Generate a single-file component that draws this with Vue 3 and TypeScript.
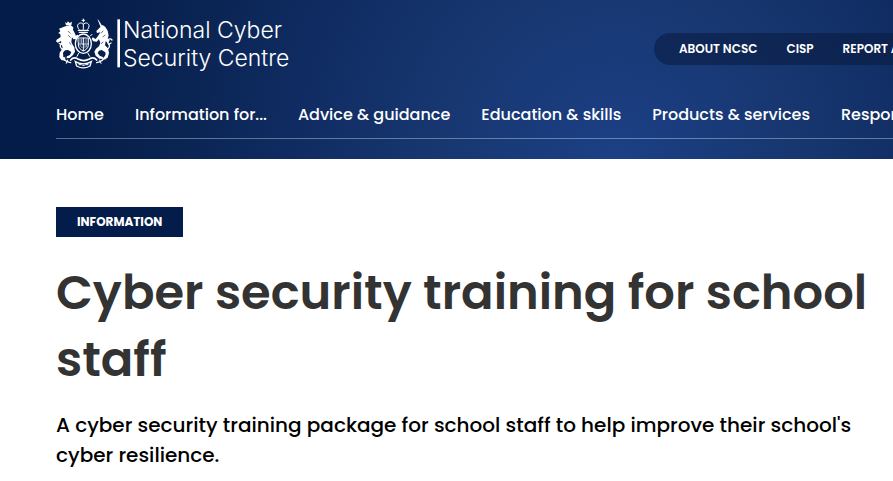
<script setup lang="ts">
interface LinkItem {
  label: string
  href: string
}

const utilityLinks: LinkItem[] = [
  { label: 'About NCSC', href: '#about' },
  { label: 'CISP', href: '#cisp' },
  { label: 'Report an incident', href: '#report' },
]

const mainLinks: LinkItem[] = [
  { label: 'Home', href: '#home' },
  { label: 'Information for...', href: '#information' },
  { label: 'Advice & guidance', href: '#advice' },
  { label: 'Education & skills', href: '#education' },
  { label: 'Products & services', href: '#products' },
  { label: 'Response', href: '#response' },
]
</script>

<template>
  <header class="site-header">
    <div class="top-row">
      <a class="brand" href="#home">
        <svg class="crest" viewBox="18 24 195 156" aria-hidden="true">
          <g fill="none" stroke="#fff" stroke-width="3" stroke-linecap="round">
            <!-- crown -->
            <path d="M100 27v9M96 31h8M87 58c-9-10-3-20 7-19l6 4 6-4c10-1 16 9 7 19M100 42v16" />
            <path d="M85 61h30M88 67h24" stroke-width="4" />
            <!-- garter and shield -->
            <ellipse cx="100" cy="101" rx="24" ry="29" stroke-width="4" />
            <path d="M85 84h30v22c0 8-9 15-15 17-6-2-15-9-15-17zM100 84v38M86 102h28" />
            <path d="M90 88v10M95 88v10M105 90h6M105 96h6M90 106l6 7M105 106v8M110 106v5" stroke-width="2" />
            <path d="M79 78l-5-5M121 78l5-5M86 130l-5 9M114 130l5 9" />
            <!-- tails -->
            <path d="M49 118c-12 2-20-4-18-12 2-7 10-8 9-15-1-5-7-7-10-2M34 104l-6-4M41 90l5-6" stroke-width="4" />
            <path d="M160 117c14 2 20-3 18-11-2-6-8-8-5-14 2-6 9-7 13-2M176 103l7-4M173 93l-6-4" stroke-width="4" />
            <!-- plants and compartment -->
            <path d="M35 137c6 13 14 19 27 21M167 137c-6 13-14 19-27 21" stroke-width="4" />
            <path d="M45 142l-8 6M53 150l-4 10M157 142l8 6M149 150l4 10" />
            <path d="M62 150c9-11 17-6 22-3 11 6 23 6 34 0 5-3 13-8 22 3" stroke-width="5" />
            <path d="M76 155c14 9 34 9 48 0l-4 13c-12 7-28 7-40 0z" stroke-width="4" />
            <path d="M87 164h7M98 166h5M107 164h7" />
          </g>
          <g fill="#fff">
            <!-- lion -->
            <path d="M45 36l5 4 4-6 5 5 7-4-2 11H48z" />
            <path d="M48 48l13-3 9 7-1 8 5 8 2 10 7-4 3 5-7 8-9 1-4-6-2 14 4 8 5 8 2 13-6 10-10 9-10 1 2-6 9-4 4-9-10-6-9 1-6 7 1 13 7 6-3 5-10-2-6-8 1-14 9-14-3-12-2-9-10 5-5-4 2-5 12-8-1-8-6-4 6-5-4-8z" />
            <!-- unicorn -->
            <path d="M142 27l5 5 11 18-5 4z" />
            <path d="M148 54l10-9 8 6 7 11 3 15-3 8 6 6-4 8-8-5-2 12 9 9 3 14-4 14-8 5-3-5 5-6-1-10-11-7-8 2-4 7 6 8 9 4 1 6-11-1-11-9-4-12 5-9 9-7 4-10-4-11-7 7-10-1-5-7 3-5 9 5 7-9 7-11-10 2-2-6z" />
          </g>
          <path d="M54 63l7 8M55 76l7 7M160 62l-7 8M166 75l-8 6M160 96l-7 5M58 97l5 7" fill="none" stroke="#0a2352" stroke-width="2" />
          <path d="M202 28h8v144h-8z" fill="#fff" />
        </svg>
        <span class="brand-name">National Cyber<br />Security Centre</span>
      </a>
      <nav class="utility" aria-label="Utility">
        <a v-for="link in utilityLinks" :key="link.label" :href="link.href">{{ link.label }}</a>
      </nav>
    </div>
    <nav class="main-nav" aria-label="Main">
      <a v-for="link in mainLinks" :key="link.label" :href="link.href">{{ link.label }}</a>
    </nav>
  </header>
  <main class="content">
    <span class="tag">Information</span>
    <h1>Cyber security training for school staff</h1>
    <p>A cyber security training package for school staff to help improve their school's cyber resilience.</p>
  </main>
</template>

<style>
body {
  background: #fff;
  font-family: Poppins, Inter, 'Liberation Sans', sans-serif;
}
</style>

<style scoped>
.site-header {
  box-sizing: border-box;
  overflow: hidden;
  padding: 16px 0 20px 56px;
  color: #fff;
  background: radial-gradient(circle 560px at 69% 100%, #1c4086 0%, #17366f 34%, #102c63 56%, #0a2453 78%, #041c49 100%);
}

a {
  color: inherit;
  text-decoration: none;
  white-space: nowrap;
  flex-shrink: 0;
}

.top-row {
  display: flex;
  justify-content: space-between;
  align-items: flex-start;
  height: 56px;
}

.brand {
  display: flex;
  align-items: flex-start;
  gap: 2px;
}

.crest {
  width: 65px;
  height: 52px;
  margin-top: 2px;
}

.brand-name {
  font-family: 'Helvetica Neue', Inter, 'Liberation Sans', sans-serif;
  font-size: 23px;
  font-weight: 300;
  line-height: 28px;
}

.utility {
  display: flex;
  gap: 29px;
  box-sizing: border-box;
  width: 239px;
  margin-top: 17px;
  padding-left: 25px;
  border-radius: 16px 0 0 16px;
  background: rgba(10, 29, 66, 0.6);
  font-size: 12px;
  font-weight: 600;
  line-height: 32px;
  text-transform: uppercase;
}

.main-nav {
  display: flex;
  gap: 31px;
  margin-top: 30px;
  padding-bottom: 10px;
  border-bottom: 1px solid rgba(255, 255, 255, 0.35);
  font-size: 16px;
  font-weight: 500;
  line-height: 26px;
}

.content {
  padding: 48px 24px 0 56px;
}

.tag {
  display: inline-block;
  padding: 0 21px;
  color: #fff;
  background: #041c49;
  font-size: 12px;
  font-weight: 700;
  line-height: 30px;
  text-transform: uppercase;
}

h1 {
  margin: 22px 0 0;
  color: #333;
  font-size: 48px;
  font-weight: 600;
  line-height: 67px;
}

p {
  margin: 17px 0 0;
  color: #000;
  font-size: 20px;
  font-weight: 500;
  line-height: 30px;
}
</style>
